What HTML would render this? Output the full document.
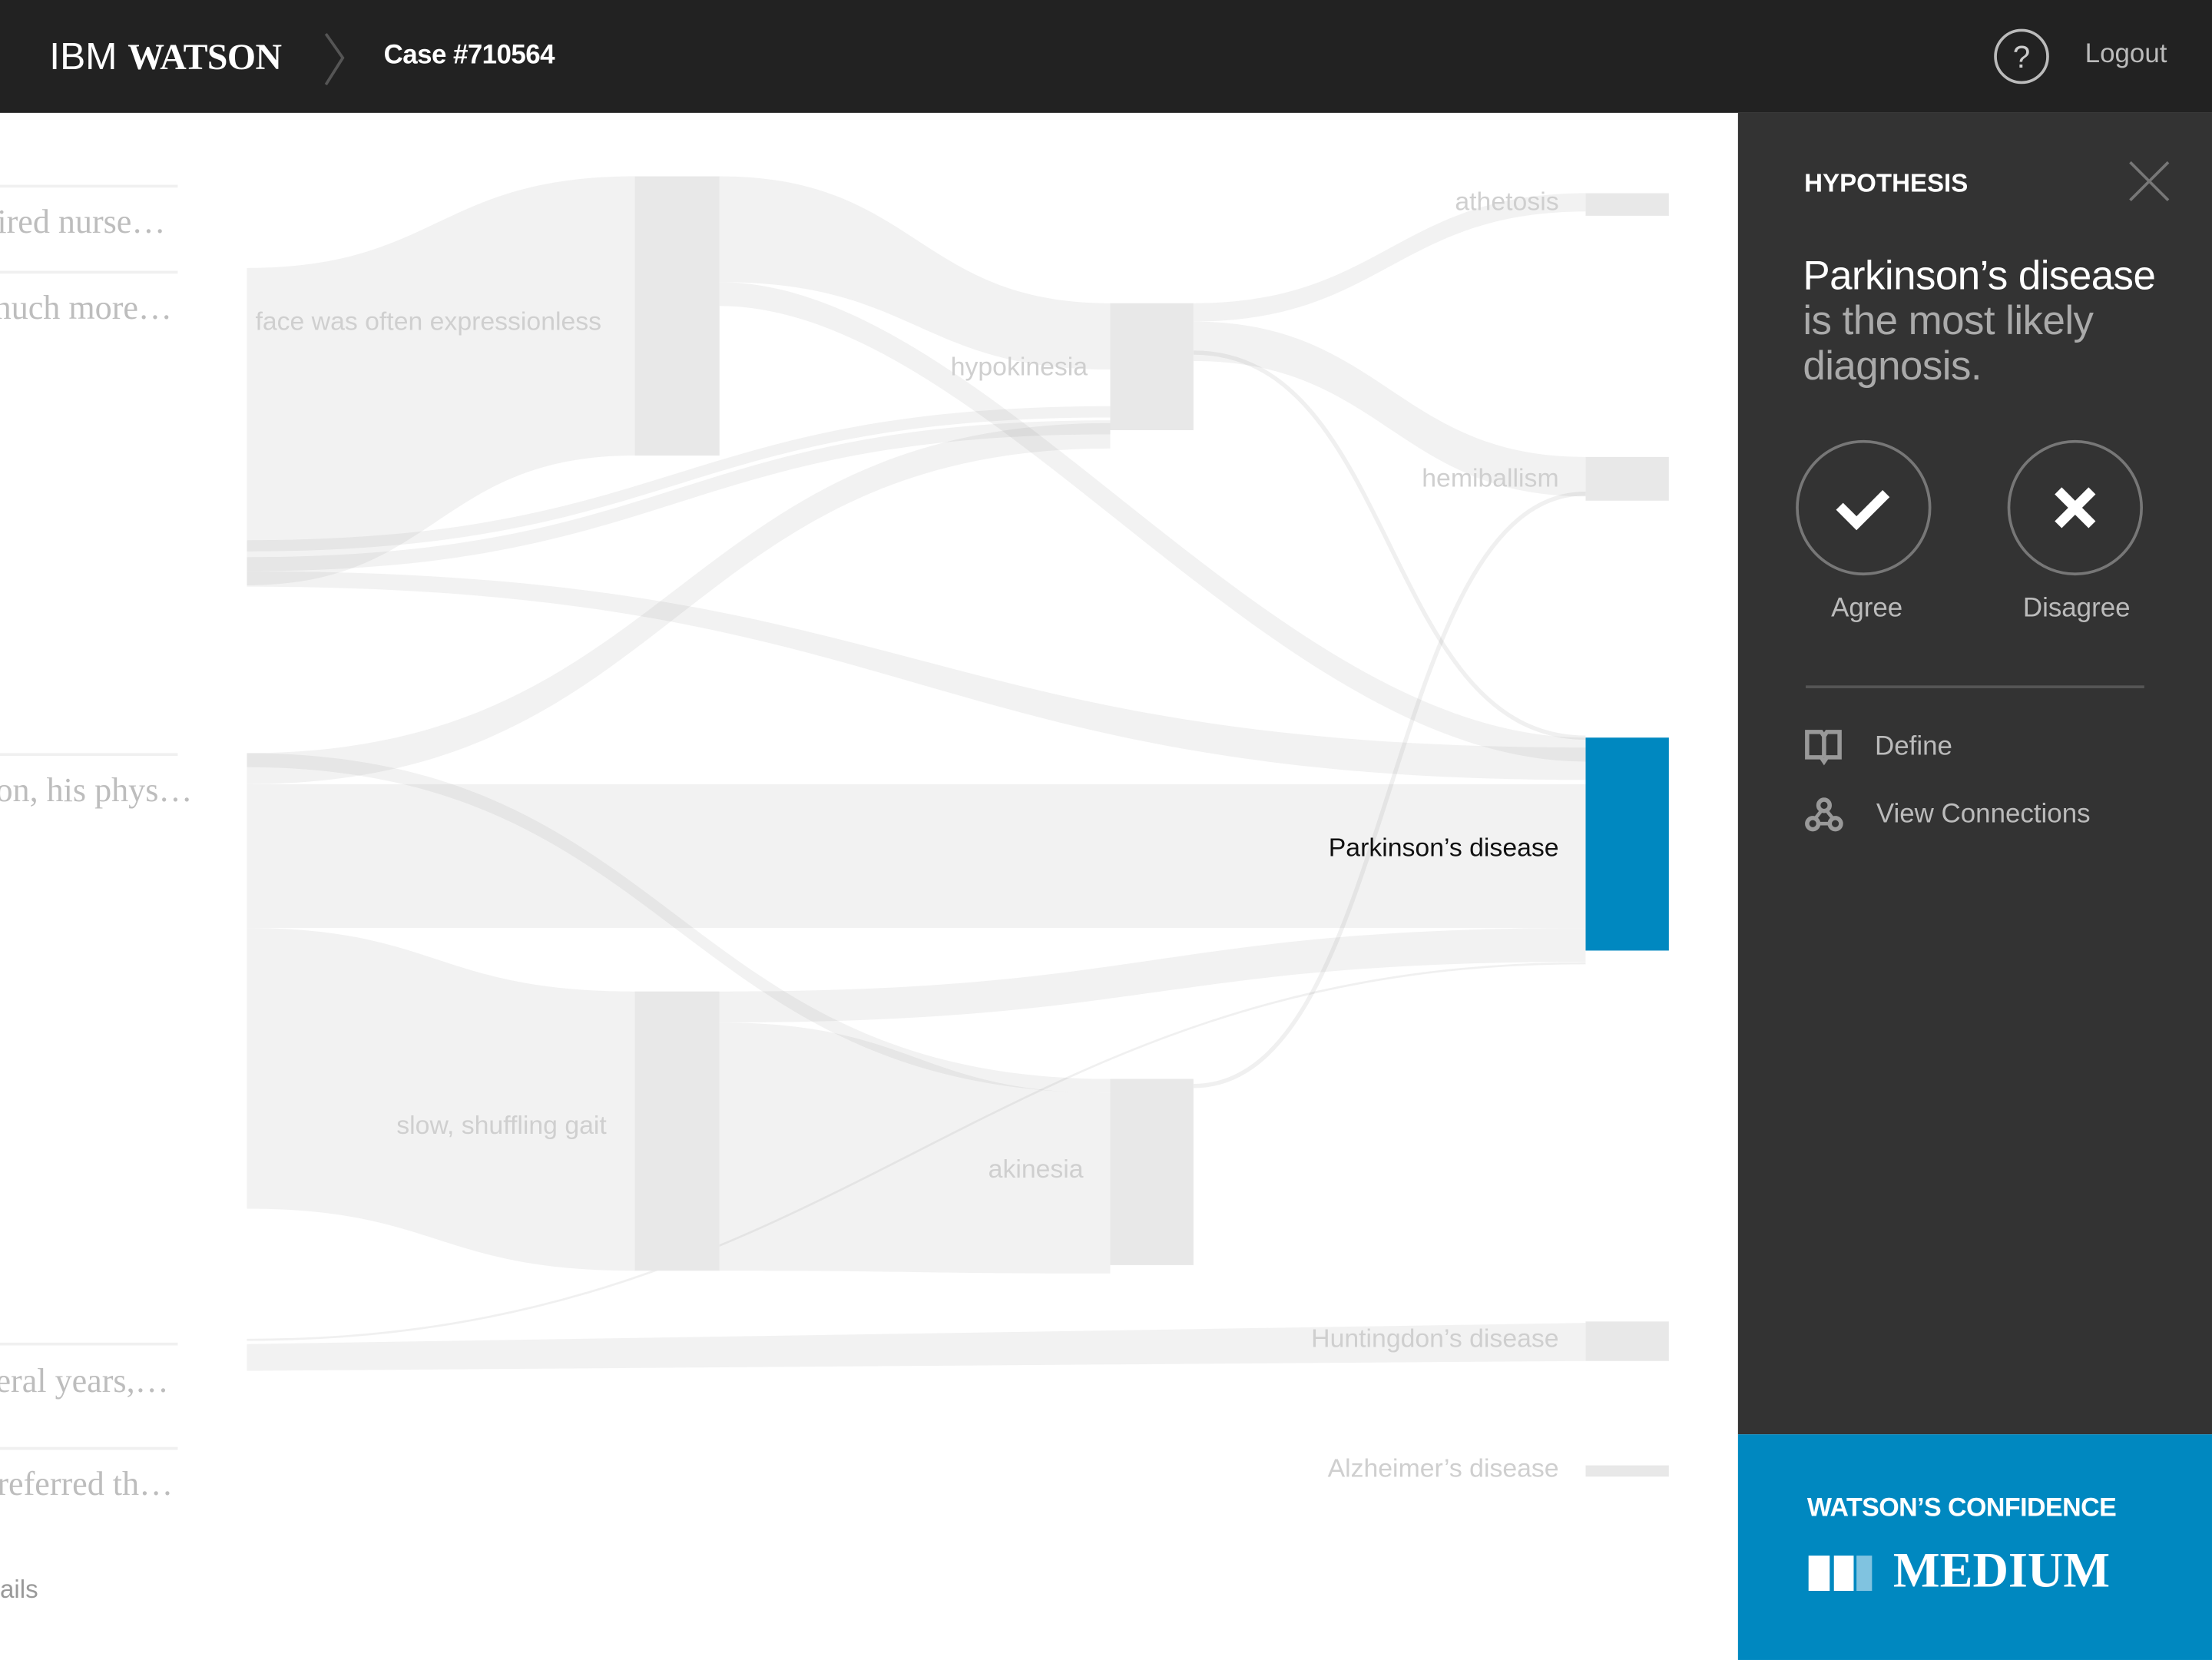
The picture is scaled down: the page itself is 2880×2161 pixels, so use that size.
<!DOCTYPE html>
<html><head><meta charset="utf-8"><style>
html,body{margin:0;padding:0;width:2880px;height:2161px;overflow:hidden;background:#fff}
#w{position:absolute;left:0;top:0;width:1568px;height:1177px;transform:scale(1.83673,1.8360);transform-origin:0 0;font-family:"Liberation Sans",sans-serif}
.a{position:absolute;white-space:nowrap}
.sf{font-family:"Liberation Serif",serif;color:#bdbdbd;font-size:24px}
.hr{position:absolute;left:0;width:126px;height:2px;background:#f0f0f0}
.lb{position:absolute;font-size:18.4px;color:#cfcfcf;white-space:nowrap;line-height:20px}
.r{text-align:right}
</style></head><body><div id="w">
<div class="a" style="left:0;top:0;width:1568px;height:80px;background:#222"></div>
<div class="a" style="left:35px;top:25px;color:#fff;font-size:27px;line-height:30px"><span style="font-weight:300">IBM</span> <span style="font-family:'Liberation Serif',serif;font-weight:bold;font-size:26px;letter-spacing:-0.3px">WATSON</span></div>
<svg class="a" style="left:228px;top:22px" width="20" height="40"><path d="M3,2 L15,19 L3,38" stroke="#555" stroke-width="2" fill="none"/></svg>
<div class="a" style="left:272px;top:29px;color:#fff;font-size:19px;font-weight:bold;line-height:22px;letter-spacing:-0.3px">Case #710564</div>
<svg class="a" style="left:1412px;top:19px" width="44" height="44"><circle cx="21" cy="21" r="18.5" stroke="#bbb" stroke-width="2" fill="none"/><text x="21" y="29" text-anchor="middle" fill="#ccc" font-size="22" font-family="Liberation Sans">?</text></svg>
<div class="a" style="left:1478px;top:28px;color:#bbb;font-size:19px;line-height:22px">Logout</div>

<div class="hr" style="top:131px"></div><div class="hr" style="top:192px"></div><div class="hr" style="top:534px"></div><div class="hr" style="top:952px"></div><div class="hr" style="top:1026px"></div>
<div class="a sf" style="left:-2px;top:145px">ired nurse…</div>
<div class="a sf" style="left:-4px;top:206px">nuch more…</div>
<div class="a sf" style="left:-3px;top:548px">on, his phys…</div>
<div class="a sf" style="left:-3px;top:967px">eral years,…</div>
<div class="a sf" style="left:-2px;top:1040px">referred th…</div>
<div class="a" style="left:0;top:1117px;color:#999;font-size:18px">ails</div>

<svg class="a" style="left:0;top:0" width="1232" height="1177">
<g fill="#000" fill-opacity="0.05">
<path d="M175,190 C310,190 310,125 450,125 L450,323 C310,323 310,415 175,415Z"/>
<path d="M510,125 C650,125 650,215 787,215 L787,262 C650,262 650,200 510,200Z"/>
<path d="M510,200 C700,200 900,523 1124,523 L1124,540 C900,540 700,217 510,217Z"/>
<path d="M846,215 C980,215 990,137 1124,137 L1124,150 C990,150 980,228 846,228Z"/>
<path d="M846,228 C980,228 990,324 1124,324 L1124,352 C990,352 980,256 846,256Z"/>
<path d="M175,383 C480,383 480,288 787,288 L787,296 C480,296 480,391 175,391Z"/>
<path d="M175,395 C480,395 480,298 787,298 L787,308 C480,308 480,405 175,405Z"/>
<path d="M175,405 C650,405 650,530 1124,530 L1124,553 C650,553 650,416 175,416Z"/>
<path d="M175,534 C480,534 480,300 787,300 L787,318 C480,318 480,556 175,556Z"/>
<path d="M175,534 C480,534 480,765 787,765 L787,775 C480,775 480,544 175,544Z"/>
<path d="M175,556 L1124,556 L1124,658 L175,658Z"/>
<path d="M175,658 C310,658 310,703 450,703 L450,901 C310,901 310,857 175,857Z"/>
<path d="M510,703 C820,703 820,658 1124,658 L1124,682 C820,682 820,725 510,725Z"/>
<path d="M510,725 C650,725 650,775 787,775 L787,903 C650,903 650,901 510,901Z"/>
<path d="M175,953 L1124,938 L1124,965 L175,972Z"/>
</g>
<g fill="none" stroke="#000" stroke-opacity="0.06" stroke-width="3">
<path d="M846,250 C990,250 980,523 1124,523"/>
<path d="M846,770 C990,770 980,350 1124,350"/>
<path d="M175,950 C600,950 700,683 1124,683" stroke-width="1.5"/>
</g>
<g fill="#e8e8e8">
<rect x="450" y="125" width="60" height="198"/><rect x="787" y="215" width="59" height="90"/>
<rect x="450" y="703" width="60" height="198"/><rect x="787" y="765" width="59" height="132"/>
<rect x="1124" y="137" width="59" height="16"/><rect x="1124" y="324" width="59" height="31"/>
<rect x="1124" y="937" width="59" height="28"/><rect x="1124" y="1039" width="59" height="8"/>
</g>
<rect x="1124" y="523" width="59" height="151" fill="#0088c0"/>
</svg>
<div class="lb" style="left:181px;top:218px">face was often expressionless</div>
<div class="lb r" style="right:797px;top:250px">hypokinesia</div>
<div class="lb r" style="right:1138px;top:788px">slow, shuffling gait</div>
<div class="lb r" style="right:800px;top:819px">akinesia</div>
<div class="lb r" style="right:463px;top:133px">athetosis</div>
<div class="lb r" style="right:463px;top:329px">hemiballism</div>
<div class="lb r" style="right:463px;top:591px;color:#111">Parkinson’s disease</div>
<div class="lb r" style="right:463px;top:939px">Huntingdon’s disease</div>
<div class="lb r" style="right:463px;top:1031px">Alzheimer’s disease</div>

<div class="a" style="left:1232px;top:80px;width:336px;height:937px;background:#333"></div>
<div class="a" style="left:1279px;top:119px;color:#fff;font-size:18px;font-weight:bold;line-height:22px">HYPOTHESIS</div>
<svg class="a" style="left:1508px;top:113px" width="32" height="32"><path d="M2,2 L29,29 M29,2 L2,29" stroke="#777" stroke-width="2"/></svg>
<div class="a" style="left:1278px;top:180px;font-size:28.8px;line-height:32px;color:#aaa;letter-spacing:-0.3px"><span style="color:#fff">Parkinson’s disease</span><br>is the most likely<br>diagnosis.</div>
<svg class="a" style="left:1272px;top:311px" width="260" height="100">
<circle cx="49" cy="49" r="47" stroke="#777" stroke-width="2" fill="none"/>
<circle cx="199" cy="49" r="47" stroke="#777" stroke-width="2" fill="none"/>
<path d="M32,48 L44,60 L65,39" stroke="#fff" stroke-width="7" fill="none"/>
<path d="M187,37 L211,61 M211,37 L187,61" stroke="#fff" stroke-width="7" fill="none"/>
</svg>
<div class="a" style="left:1298px;top:421px;color:#bbb;font-size:19px;line-height:22px">Agree</div>
<div class="a" style="left:1434px;top:421px;color:#bbb;font-size:19px;line-height:22px">Disagree</div>
<div class="a" style="left:1280px;top:486px;width:240px;height:2px;background:#555"></div>
<svg class="a" style="left:1279px;top:516px" width="30" height="80">
<path d="M2,3 L12,3 L14,6 L16,3 L25,3 L25,21 L16,21 L14,24 L12,21 L2,21Z M14,6 L14,21" stroke="#999" stroke-width="3" fill="none"/>
<circle cx="14" cy="55" r="4" stroke="#999" stroke-width="3" fill="none"/>
<circle cx="6" cy="68" r="4" stroke="#999" stroke-width="3" fill="none"/>
<circle cx="22" cy="68" r="4" stroke="#999" stroke-width="3" fill="none"/>
<path d="M12,59 L8,64 M16,59 L20,64 M10,68 L18,68" stroke="#999" stroke-width="2.5"/>
</svg>
<div class="a" style="left:1329px;top:519px;color:#bbb;font-size:19px;line-height:22px">Define</div>
<div class="a" style="left:1330px;top:567px;color:#bbb;font-size:19px;line-height:22px">View Connections</div>

<div class="a" style="left:1232px;top:1017px;width:336px;height:160px;background:#0088c0"></div>
<div class="a" style="left:1281px;top:1058px;color:#fff;font-size:18.5px;font-weight:bold;line-height:22px;letter-spacing:-0.3px">WATSON’S CONFIDENCE</div>
<div class="a" style="left:1282px;top:1103px;width:15px;height:25px;background:#fff"></div>
<div class="a" style="left:1300px;top:1103px;width:14px;height:25px;background:#fff"></div>
<div class="a" style="left:1316px;top:1103px;width:11px;height:25px;background:#80c3e0"></div>
<div class="a" style="left:1342px;top:1094px;color:#fff;font-family:'Liberation Serif',serif;font-weight:bold;font-size:35px;line-height:40px">MEDIUM</div>
</div></body></html>
